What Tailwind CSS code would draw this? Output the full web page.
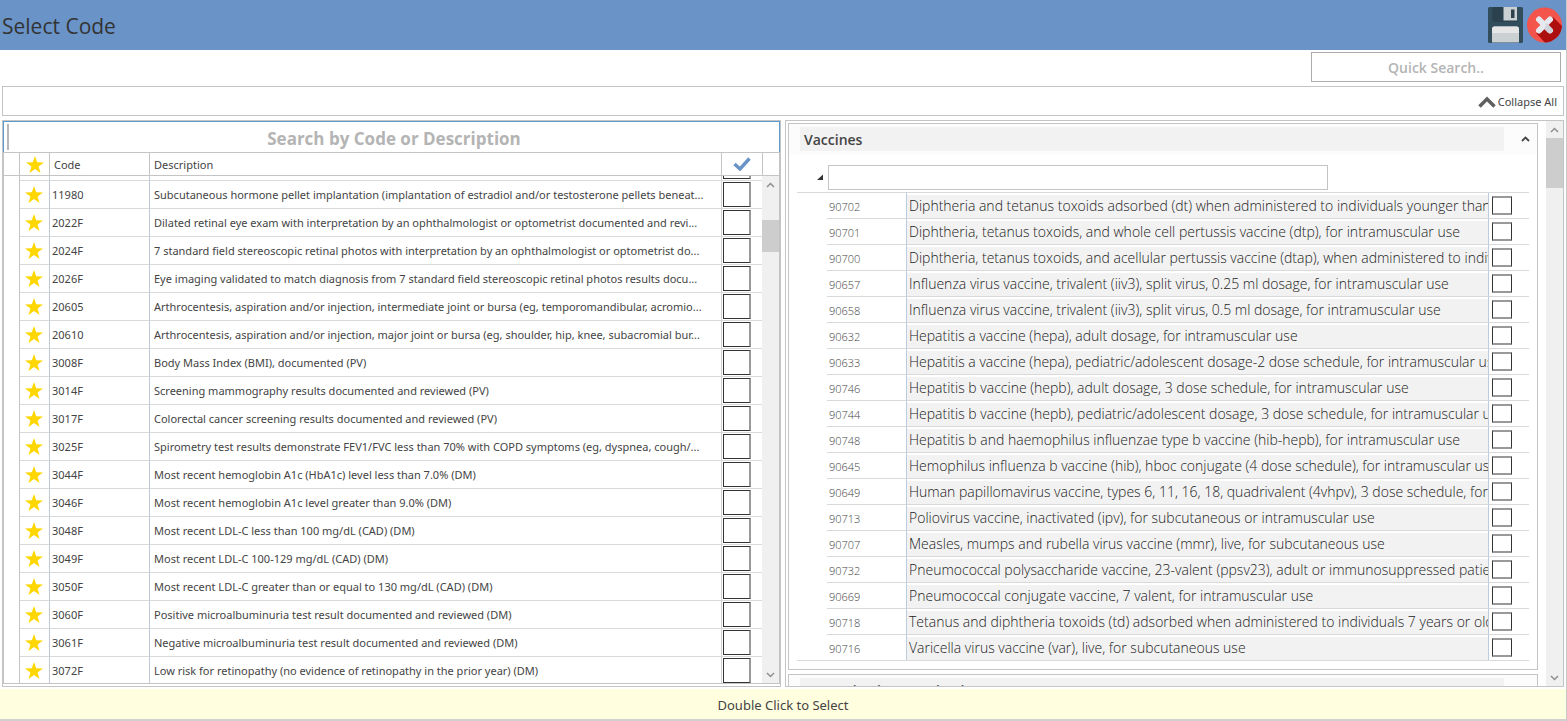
<!DOCTYPE html>
<html lang="en">
<head>
    <meta charset="UTF-8">
    <meta name="viewport" content="width=device-width, initial-scale=1.0">
    <title>Select Code</title>
    <script src="https://cdn.jsdelivr.net/npm/@tailwindcss/browser@4"></script>
</head>
<body class="h-screen flex flex-col overflow-hidden bg-white border-r border-b-2 border-r-[#c8c8c8] border-b-[#d0d0d0] font-['Open_Sans','Noto_Sans',sans-serif] text-[#444444]">
    <header class="h-[50px] shrink-0 flex items-center justify-between bg-[#6a93c7] pl-0.5 pr-1">
        <h1 class="text-[21px] leading-7 text-[#333333] pt-0.5">Select Code</h1>
        <div class="flex items-center gap-1">
            <button type="button" aria-label="Save">
                <svg class="block w-[35px] h-9" viewBox="0 0 35 36">
                    <rect width="35" height="36" rx="1.5" fill="#324d5c"/>
                    <path d="M4.500 0H29V15H6.500A2 2 0 0 1 4.500 13Z" fill="#2b414d"/>
                    <path d="M15.500 0H29V13.500H15.500Z" fill="#cbd0d3"/>
                    <path d="M23 2.500H26.500V11H23Z" fill="#2b414d"/>
                    <path d="M4 22Q4 19.500 6.500 19.500H28.500Q31 19.500 31 22V35.500H4Z" fill="#cbd0d3"/>
                    <path d="M4 22Q4 19.500 6.500 19.500H28.500Q31 19.500 31 22V26H4Z" fill="#e6e6e6"/>
                </svg>
            </button>
            <button type="button" aria-label="Close">
                <svg class="block w-[35px] h-9" viewBox="0 0 35 36">
                    <defs><clipPath id="disc"><circle cx="17.500" cy="18" r="17.500"/></clipPath></defs>
                    <g clip-path="url(#disc)">
                        <rect width="35" height="36" fill="#f3544b"/>
                        <path d="M26 10L40 24V40H22L9.500 26.500L16 18Z" fill="#ad0e0e"/>
                    </g>
                    <path d="M12 12.500L23 23.500M23 12.500L12 23.500" stroke="#e5e8ee" stroke-width="6" stroke-linecap="round"/>
                    <path d="M19.600 15.900L25.100 21.400A3 3 0 0 1 20.900 25.600L17.500 22.200Z" fill="#d0d3da"/>
                </svg>
            </button>
        </div>
    </header>

    <div class="h-9 shrink-0 flex justify-end pt-0.5 pr-[5px]">
        <input type="text" aria-label="Quick search" placeholder="Quick Search.." class="w-[250px] h-[30px] border border-[#ababab] text-center text-sm font-semibold placeholder:text-[#b4b4b4] outline-none">
    </div>

    <div class="h-[30px] shrink-0 mx-0.5 flex items-center justify-end border border-[#c4c4c4] pr-1.5 pt-px">
        <button type="button" class="flex items-center gap-0.5 font-['Noto_Sans',sans-serif] text-[11px] leading-4">
            <svg class="w-[18px] h-3" viewBox="0 0 18 12"><path d="M1.500 10.500L9 3L16.500 10.500" fill="none" stroke="#606060" stroke-width="3.500"/></svg>
            Collapse All
        </button>
    </div>

    <main class="flex-1 min-h-0 flex gap-1 mx-0.5 mt-1">
        <section class="flex-1 min-w-0 flex flex-col border border-[#c4c4c4] pb-0.5">
            <div class="h-[31px] shrink-0 flex items-center border border-b-0 border-[#5b9bd0] pl-[3px]">
                <span class="w-0.5 h-[26px] bg-[#b8b8b8]"></span>
                <input type="text" aria-label="Search by Code or Description" placeholder="Search by Code or Description" class="flex-1 pt-1 text-center text-[17px] leading-6 font-bold placeholder:text-[#b4b4b4] outline-none">
            </div>
            <div class="h-6 shrink-0 flex items-stretch border border-[#c4c4c4] font-['Noto_Sans',sans-serif] text-[11px] leading-6">
                <span class="w-4 border-r border-[#c4c4c4]"></span>
                <span class="w-[30px] flex items-center justify-center border-r border-[#c4c4c4]">
                    <svg class="w-[18px] h-[17px]" viewBox="0 0 18 17"><path d="M9 0L11.200 6.300L18 6.400L12.600 10.500L14.500 17L9 13.100L3.500 17L5.400 10.500L0 6.400L6.800 6.300Z" fill="#ffd700"/></svg>
                </span>
                <span class="w-[100px] pl-1 border-r border-[#c4c4c4]">Code</span>
                <span class="flex-1 pl-1 border-r border-[#c4c4c4]">Description</span>
                <span class="w-[41px] flex items-center justify-center border-r border-[#c4c4c4]">
                    <svg class="w-[18px] h-[14px]" viewBox="0 0 18 14"><path d="M1.500 7L7 12L16.500 1.500" fill="none" stroke="#6a93c7" stroke-width="3.400"/></svg>
                </span>
                <span class="w-4"></span>
            </div>
            <div class="flex-1 min-h-0 flex border border-t-0 border-[#c4c4c4]">
                <div class="flex-1 min-w-0 overflow-hidden">
                    <table class="-mt-[23px] w-full table-fixed border-separate border-spacing-0 font-['Noto_Sans',sans-serif] text-[11px] leading-4">
                        <colgroup>
                            <col class="w-4"><col class="w-[30px]"><col class="w-[100px]"><col><col class="w-10">
                        </colgroup>
                        <tbody id="code-rows"></tbody>
                    </table>
                </div>
                <div class="w-[17px] flex flex-col bg-[#f0f0f0]">
                    <svg class="w-[17px] h-[17px]" viewBox="0 0 17 17"><path d="M5 11L8.500 7.500L12 11" fill="none" stroke="#909090" stroke-width="1.500"/></svg>
                    <div class="mt-[27px] h-8 bg-[#cdcdcd]"></div>
                    <svg class="mt-auto w-[17px] h-[17px]" viewBox="0 0 17 17"><path d="M5 7L8.500 10.500L12 7" fill="none" stroke="#909090" stroke-width="1.500"/></svg>
                </div>
            </div>
        </section>

        <section class="flex-1 min-w-0 flex border border-[#c4c4c4]">
            <div class="flex-1 min-w-0 overflow-hidden pl-0.5 pt-0.5 pr-2">
                <article class="border border-[#c4c4c4] pb-2">
                    <div class="h-[30px] flex items-center bg-[#fcfcfc] pl-[11px] pr-[7px]">
                        <h2 class="flex-1 h-6 bg-[#f2f2f2] pl-1 text-sm leading-[26px] font-semibold">Vaccines</h2>
                        <button type="button" aria-label="Collapse Vaccines" class="ml-[17px]">
                            <svg class="block w-[9px] h-[7px]" viewBox="0 0 9 7"><path d="M1 5L4.500 1.500L8 5" fill="none" stroke="#444444" stroke-width="1.800"/></svg>
                        </button>
                    </div>
                    <div class="ml-2 mr-2">
                        <div class="flex items-center pt-[11px] pb-0.5 pl-5">
                            <svg class="w-[7px] h-[7px] mr-1" viewBox="0 0 7 7"><path d="M6 0.500V6H0Z" fill="#333333"/></svg>
                            <input type="text" aria-label="Vaccines filter" class="w-[500px] h-[25px] border border-[#c4c4c4] px-1 text-sm outline-none">
                        </div>
                        <div class="border-y border-[#d9d9d9] pl-[30px]">
                            <table class="w-full table-fixed border-separate border-spacing-0">
                                <colgroup>
                                    <col class="w-[79px]"><col><col class="w-10">
                                </colgroup>
                                <tbody id="vaccine-rows"></tbody>
                            </table>
                        </div>
                    </div>
                </article>
                <article class="mt-1 border border-[#c4c4c4]">
                    <div class="h-[30px] flex items-center bg-[#fcfcfc] pl-[11px] pr-[33px]">
                        <h2 class="flex-1 h-6 bg-[#f2f2f2] pl-1 text-sm leading-[26px] font-semibold">Immunizations &amp; Injections</h2>
                    </div>
                </article>
            </div>
            <div class="w-[17px] flex flex-col bg-[#f0f0f0]">
                <svg class="w-[17px] h-[17px]" viewBox="0 0 17 17"><path d="M5 11L8.500 7.500L12 11" fill="none" stroke="#909090" stroke-width="1.500"/></svg>
                <div class="h-[50px] bg-[#cdcdcd]"></div>
                <svg class="mt-auto w-[17px] h-[17px]" viewBox="0 0 17 17"><path d="M5 7L8.500 10.500L12 7" fill="none" stroke="#909090" stroke-width="1.500"/></svg>
            </div>
        </section>
    </main>

    <footer class="h-[30px] shrink-0 flex items-center justify-center bg-[#ffffdf] font-['Noto_Sans',sans-serif] text-[13px] leading-5 mt-0.5 pt-0.5">Double Click to Select</footer>

    <script>
        const codes = [
            ['', ''],
            ['11980', 'Subcutaneous hormone pellet implantation (implantation of estradiol and/or testosterone pellets beneat...'],
            ['2022F', 'Dilated retinal eye exam with interpretation by an ophthalmologist or optometrist documented and revi...'],
            ['2024F', '7 standard field stereoscopic retinal photos with interpretation by an ophthalmologist or optometrist do...'],
            ['2026F', 'Eye imaging validated to match diagnosis from 7 standard field stereoscopic retinal photos results docu...'],
            ['20605', 'Arthrocentesis, aspiration and/or injection, intermediate joint or bursa (eg, temporomandibular, acromio...'],
            ['20610', 'Arthrocentesis, aspiration and/or injection, major joint or bursa (eg, shoulder, hip, knee, subacromial bur...'],
            ['3008F', 'Body Mass Index (BMI), documented (PV)'],
            ['3014F', 'Screening mammography results documented and reviewed (PV)'],
            ['3017F', 'Colorectal cancer screening results documented and reviewed (PV)'],
            ['3025F', 'Spirometry test results demonstrate FEV1/FVC less than 70% with COPD symptoms (eg, dyspnea, cough/...'],
            ['3044F', 'Most recent hemoglobin A1c (HbA1c) level less than 7.0% (DM)'],
            ['3046F', 'Most recent hemoglobin A1c level greater than 9.0% (DM)'],
            ['3048F', 'Most recent LDL-C less than 100 mg/dL (CAD) (DM)'],
            ['3049F', 'Most recent LDL-C 100-129 mg/dL (CAD) (DM)'],
            ['3050F', 'Most recent LDL-C greater than or equal to 130 mg/dL (CAD) (DM)'],
            ['3060F', 'Positive microalbuminuria test result documented and reviewed (DM)'],
            ['3061F', 'Negative microalbuminuria test result documented and reviewed (DM)'],
            ['3072F', 'Low risk for retinopathy (no evidence of retinopathy in the prior year) (DM)'],
        ];
        const vaccines = [
            ['90702', 'Diphtheria and tetanus toxoids adsorbed (dt) when administered to individuals younger than'],
            ['90701', 'Diphtheria, tetanus toxoids, and whole cell pertussis vaccine (dtp), for intramuscular use'],
            ['90700', 'Diphtheria, tetanus toxoids, and acellular pertussis vaccine (dtap), when administered to individuals'],
            ['90657', 'Influenza virus vaccine, trivalent (iiv3), split virus, 0.25 ml dosage, for intramuscular use'],
            ['90658', 'Influenza virus vaccine, trivalent (iiv3), split virus, 0.5 ml dosage, for intramuscular use'],
            ['90632', 'Hepatitis a vaccine (hepa), adult dosage, for intramuscular use'],
            ['90633', 'Hepatitis a vaccine (hepa), pediatric/adolescent dosage-2 dose schedule, for intramuscular use'],
            ['90746', 'Hepatitis b vaccine (hepb), adult dosage, 3 dose schedule, for intramuscular use'],
            ['90744', 'Hepatitis b vaccine (hepb), pediatric/adolescent dosage, 3 dose schedule, for intramuscular use'],
            ['90748', 'Hepatitis b and haemophilus influenzae type b vaccine (hib-hepb), for intramuscular use'],
            ['90645', 'Hemophilus influenza b vaccine (hib), hboc conjugate (4 dose schedule), for intramuscular use'],
            ['90649', 'Human papillomavirus vaccine, types 6, 11, 16, 18, quadrivalent (4vhpv), 3 dose schedule, for intramuscular use'],
            ['90713', 'Poliovirus vaccine, inactivated (ipv), for subcutaneous or intramuscular use'],
            ['90707', 'Measles, mumps and rubella virus vaccine (mmr), live, for subcutaneous use'],
            ['90732', 'Pneumococcal polysaccharide vaccine, 23-valent (ppsv23), adult or immunosuppressed patient'],
            ['90669', 'Pneumococcal conjugate vaccine, 7 valent, for intramuscular use'],
            ['90718', 'Tetanus and diphtheria toxoids (td) adsorbed when administered to individuals 7 years or older'],
            ['90716', 'Varicella virus vaccine (var), live, for subcutaneous use'],
        ];
        document.getElementById('code-rows').innerHTML = codes.map(([code, text]) => `
            <tr class="h-7">
                <td class="p-0 border-r border-[#c4c4c4]"></td>
                <td class="p-0 border-r border-r-[#c0c8d8] border-b border-b-[#d9d9d9]">
                    <svg class="block ml-[5px] w-[18px] h-[17px]" viewBox="0 0 18 17"><path d="M9 0L11.200 6.300L18 6.400L12.600 10.500L14.500 17L9 13.100L3.500 17L5.400 10.500L0 6.400L6.800 6.300Z" fill="#ffd700"/></svg>
                </td>
                <td class="p-0 pl-0.5 border-r border-r-[#c0c8d8] border-b border-b-[#d9d9d9]">${code}</td>
                <td class="p-0 pl-1 overflow-hidden whitespace-nowrap border-r border-r-[#d0d0d0] border-b border-b-[#d9d9d9]">${text}</td>
                <td class="p-0 pl-px border-b border-b-[#d9d9d9]">
                    <input type="checkbox" aria-label="Select ${code}" class="block appearance-none w-7 h-[25px] bg-white border border-r-2 border-[#333333] border-r-[#999999]">
                </td>
            </tr>`).join('');
        document.getElementById('vaccine-rows').innerHTML = vaccines.map(([code, text]) => `
            <tr class="h-[26px] last:h-[25px] group">
                <td class="p-0 pt-0.5 pl-0.5 text-[11px] leading-4 font-light border-b border-[#d9d9d9] group-last:border-b-0">${code}</td>
                <td class="p-0 pt-0.5 border-x border-x-[#bccbe0] border-b border-b-[#d9d9d9] group-last:border-b-0">
                    <div class="h-[23px] bg-[#f2f2f2] pl-0.5 text-sm leading-[22px] font-light text-[#222222] overflow-hidden whitespace-nowrap">${text}</div>
                </td>
                <td class="p-0 pl-[3px] border-b border-[#d9d9d9] group-last:border-b-0">
                    <input type="checkbox" aria-label="Select ${code}" class="block appearance-none w-5 h-[19px] bg-white border-x border-y-2 border-x-[#333333] border-y-[#999999]">
                </td>
            </tr>`).join('');
    </script>
</body>
</html>
